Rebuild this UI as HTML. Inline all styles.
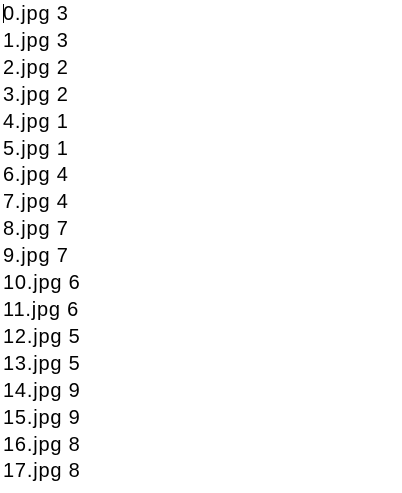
<!DOCTYPE html>
<html><head><style>
body{margin:0;background:#fff;width:402px;height:493px;overflow:hidden}
.c{position:absolute;left:3px;top:1px;font-family:"Liberation Sans",sans-serif;font-size:20px;letter-spacing:0.8px;line-height:26.9px;color:#000;white-space:pre}
.cur{position:absolute;left:3px;top:4px;width:1px;height:19px;background:#000}
</style></head><body>
<div class="c">0.jpg 3
1.jpg 3
2.jpg 2
3.jpg 2
4.jpg 1
5.jpg 1
6.jpg 4
7.jpg 4
8.jpg 7
9.jpg 7
10.jpg 6
11.jpg 6
12.jpg 5
13.jpg 5
14.jpg 9
15.jpg 9
16.jpg 8
17.jpg 8</div>
<div class="cur"></div>
</body></html>
